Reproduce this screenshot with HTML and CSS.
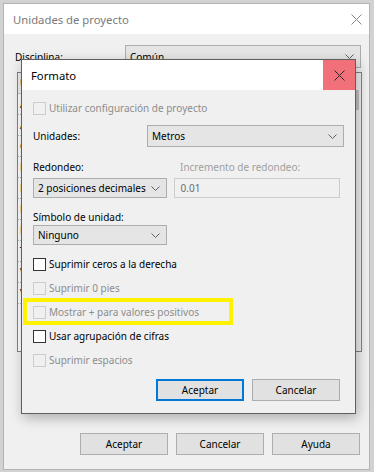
FILE: index.html
```html
<!DOCTYPE html>
<html lang="es">
<head>
    <meta charset="UTF-8">
    <meta name="viewport" content="width=device-width, initial-scale=1.0">
    <title>Unidades de proyecto</title>
    <link rel="stylesheet" href="styles.css">
</head>
<body>
    <div class="window">
        <div class="titlebar">
            <span class="title">Unidades de proyecto</span>
            <svg class="close" width="11" height="11" viewBox="0 0 11 11">
                <path d="M0.5 0.5 L10.5 10.5 M10.5 0.5 L0.5 10.5" stroke="#8a8a8a" stroke-width="1"/>
            </svg>
        </div>
        <div class="content">
            <div class="discipline">
                <span>Disciplina:</span>
                <div class="combo wide">
                    <span>Común</span>
                    <svg class="chev" width="9" height="5" viewBox="0 0 9 5"><polyline points="0.5,0.5 4.5,4.5 8.5,0.5" fill="none" stroke="#606060"/></svg>
                </div>
            </div>
            <div class="table">
                <div class="table-body">
                    <div class="thead"><span>Unidades</span><span>Formato</span></div>
                    <div class="trow"><span>Ángulo</span><span>12.35°</span></div>
                    <div class="trow"><span>Área</span><span>1235 m²</span></div>
                    <div class="trow"><span>Coste por área</span><span>1234.57</span></div>
                    <div class="trow"><span>Distancia</span><span>1234.57</span></div>
                    <div class="trow"><span>Longitud</span><span>1235 [mm]</span></div>
                    <div class="trow"><span>Pendiente</span><span>12.35°</span></div>
                    <div class="trow"><span>Moneda</span><span>1234.57</span></div>
                    <div class="trow"><span>Tiempo</span><span>1234.57</span></div>
                    <div class="trow"><span>Velocidad</span><span>1234.57</span></div>
                    <div class="trow"><span>Volumen</span><span>1234.57 m³</span></div>
                </div>
                <div class="scrollbar"><div class="thumb"></div></div>
            </div>
            <div class="footer">
                <button class="btn">Aceptar</button>
                <button class="btn">Cancelar</button>
                <button class="btn">Ayuda</button>
            </div>
        </div>

        <div class="modal">
            <div class="modal-title">
                <span>Formato</span>
                <div class="modal-close">
                    <svg width="11" height="11" viewBox="0 0 11 11">
                        <path d="M0.5 0.5 L10.5 10.5 M10.5 0.5 L0.5 10.5" stroke="#2b2b2b" stroke-width="1"/>
                    </svg>
                </div>
            </div>
            <div class="modal-body">
                <label class="check off first"><span class="box"></span>Utilizar configuración de proyecto</label>
                <div class="units">
                    <span>Unidades:</span>
                    <div class="combo units-combo">
                        <span>Metros</span>
                        <svg class="chev" width="9" height="5" viewBox="0 0 9 5"><polyline points="0.5,0.5 4.5,4.5 8.5,0.5" fill="none" stroke="#606060"/></svg>
                    </div>
                </div>
                <div class="pair labels">
                    <span class="col-left">Redondeo:</span>
                    <span class="muted">Incremento de redondeo:</span>
                </div>
                <div class="pair">
                    <div class="combo small">
                        <span>2 posiciones decimales</span>
                        <svg class="chev" width="9" height="5" viewBox="0 0 9 5"><polyline points="0.5,0.5 4.5,4.5 8.5,0.5" fill="none" stroke="#606060"/></svg>
                    </div>
                    <div class="textbox">0.01</div>
                </div>
                <div class="sym-label">Símbolo de unidad:</div>
                <div class="combo small">
                    <span>Ninguno</span>
                    <svg class="chev" width="9" height="5" viewBox="0 0 9 5"><polyline points="0.5,0.5 4.5,4.5 8.5,0.5" fill="none" stroke="#606060"/></svg>
                </div>
                <div class="checks">
                    <label class="check"><span class="box"></span>Suprimir ceros a la derecha</label>
                    <label class="check off"><span class="box"></span>Suprimir 0 pies</label>
                    <label class="check off marked"><span class="box"></span>Mostrar + para valores positivos</label>
                    <label class="check"><span class="box"></span>Usar agrupación de cifras</label>
                    <label class="check off"><span class="box"></span>Suprimir espacios</label>
                </div>
                <div class="modal-buttons">
                    <button class="btn focus">Aceptar</button>
                    <button class="btn">Cancelar</button>
                </div>
            </div>
        </div>
    </div>
</body>
</html>
```

FILE: styles.css
```css
body{
    margin: 0;
    background-color: #d2d2d2;
    font-family: "Noto Sans", "Liberation Sans", sans-serif;
    font-size: 10px;
    color: #000;
}
.window{
    position: relative;
    margin: 3px 4px 2px 3px;
    height: 465px;
    border: 1px solid #b4b4b4;
    background-color: #f0f0f0;
    display: flex;
    flex-direction: column;
}
.titlebar{
    height: 30px;
    background-color: #fff;
    display: flex;
    align-items: center;
    justify-content: space-between;
    padding: 0 7px 0 9px;
}
.title{
    font-size: 11.3px;
    color: #7a7a7a;
}
.content{
    flex: 1;
    display: flex;
    flex-direction: column;
    padding: 11px 7px 14px 11px;
}
.discipline{
    display: flex;
    align-items: center;
    height: 23px;
}
.combo{
    box-sizing: border-box;
    display: flex;
    align-items: center;
    justify-content: space-between;
    background-color: #e5e5e5;
    border: 1px solid #adadad;
    padding: 0 6px 0 4px;
    height: 22px;
}
.combo .chev{
    flex-shrink: 0;
}
.combo.wide{
    margin-left: auto;
    margin-right: 1px;
    width: 236px;
    height: 23px;
}
.table{
    margin: 4px 0 0 2px;
    height: 280px;
    box-sizing: border-box;
    border: 1px solid #828282;
    background-color: #fff;
    display: flex;
}
.table-body{
    flex: 1;
}
.thead{
    display: flex;
    background-color: #f0f0f0;
    border-bottom: 1px solid #c8c8c8;
    height: 20px;
    align-items: center;
}
.thead span, .trow span{
    width: 160px;
    padding-left: 2px;
}
.trow{
    display: flex;
    height: 20px;
    align-items: center;
    border-bottom: 1px dotted #bdbdbd;
}
.scrollbar{
    width: 17px;
    background-color: #f0f0f0;
    border-left: 1px solid #c8c8c8;
    padding-top: 17px;
}
.thumb{
    margin: 0 2px;
    height: 20px;
    background-color: #c2c2c2;
}
.footer{
    margin-top: auto;
    display: flex;
    justify-content: flex-end;
    gap: 8px;
    padding-right: 2px;
}
.btn{
    box-sizing: border-box;
    width: 88px;
    height: 22px;
    background-color: #e1e1e1;
    border: 1px solid #adadad;
    font-family: inherit;
    font-size: 10px;
    color: #000;
    padding: 0;
}
.btn.focus{
    border: 2px solid #0078d7;
}

.modal{
    position: absolute;
    left: 17px;
    top: 55px;
    width: 335px;
    box-sizing: border-box;
    border: 1px solid #5f5f5f;
    background-color: #f0f0f0;
    box-shadow: 2px 4px 12px rgba(0, 0, 0, 0.28);
}
.modal-title{
    height: 30px;
    background-color: #fff;
    display: flex;
    align-items: center;
    justify-content: space-between;
    padding-left: 9px;
    font-size: 11.3px;
}
.modal-close{
    width: 32px;
    height: 30px;
    background-color: #f1707a;
    display: flex;
    align-items: center;
    justify-content: center;
}
.modal-body{
    padding: 0 15px 12px 11px;
    display: flex;
    flex-direction: column;
}
.check{
    display: flex;
    align-items: center;
    gap: 3px;
    height: 24px;
}
.check.first{
    margin-top: 6px;
}
.box{
    width: 13px;
    height: 13px;
    box-sizing: border-box;
    border: 1px solid #333;
    background-color: #fff;
}
.check.off{
    color: #8d8d8d;
}
.check.off .box{
    border-color: #cccccc;
    background-color: #f0f0f0;
}
.check.marked{
    position: relative;
}
.check.marked::after{
    content: "";
    position: absolute;
    left: -10px;
    top: -2px;
    width: 210px;
    height: 27px;
    box-sizing: border-box;
    border: 4px solid #fff200;
}
.units{
    display: flex;
    align-items: center;
    justify-content: space-between;
    margin-top: 5px;
    margin-right: -4px;
}
.units-combo{
    width: 197px;
}
.pair{
    display: flex;
    gap: 7px;
    align-items: center;
}
.labels{
    margin-top: 13px;
    height: 14px;
}
.labels .col-left{
    width: 140px;
}
.muted{
    color: #a0a0a0;
}
.pair .combo{
    margin-top: 4px;
}
.combo.small{
    width: 134px;
    height: 20px;
}
.textbox{
    box-sizing: border-box;
    margin-top: 4px;
    width: 167px;
    height: 20px;
    border: 1px solid #cccccc;
    background-color: #f0f0f0;
    color: #6d6d6d;
    padding-left: 6px;
    line-height: 18px;
}
.sym-label{
    margin-top: 12px;
    height: 14px;
    line-height: 14px;
    margin-bottom: 1px;
}
.checks{
    margin-top: 7px;
    display: flex;
    flex-direction: column;
}
.modal-buttons{
    margin-top: 7px;
    display: flex;
    justify-content: flex-end;
    gap: 8px;
}
```
